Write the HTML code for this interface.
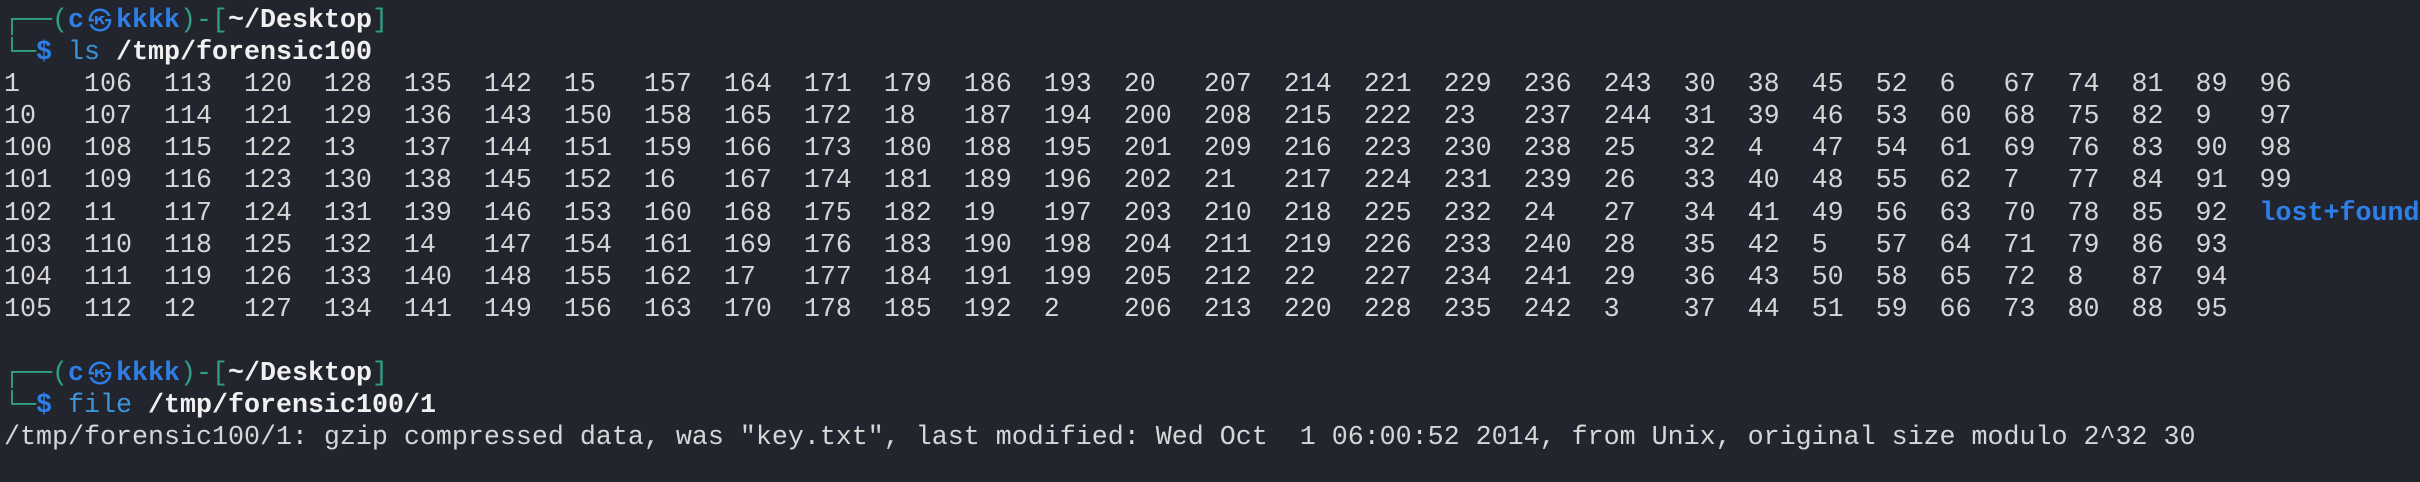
<!DOCTYPE html>
<html><head><meta charset="utf-8"><style>
html,body{margin:0;padding:0;background:#22252e;width:2420px;height:482px;overflow:hidden}
pre{margin:0;padding:5px 0 0 4px;font-family:"Liberation Mono","DejaVu Sans Mono",monospace;font-size:26.67px;line-height:32.1px;color:#d6d6d6}
.t{color:#2f9f86}.b{color:#2f7fe8;font-weight:bold}.c{color:#3c95d8}.w{color:#f0f0f0;font-weight:bold}.l{color:#2f7fe8;font-weight:bold}
.s{display:inline-block;width:32px;text-align:center;font-family:"DejaVu Sans","Noto Sans CJK JP",sans-serif;font-size:24px;font-weight:normal;line-height:32.1px;vertical-align:top}
</style></head><body><pre><span class="t">┌──(</span><span class="b">c<span class="s">㉿</span>kkkk</span><span class="t">)-[</span><span class="w">~/Desktop</span><span class="t">]</span>
<span class="t">└─</span><span class="b">$</span> <span class="c">ls</span> <span class="w">/tmp/forensic100</span>
1    106  113  120  128  135  142  15   157  164  171  179  186  193  20   207  214  221  229  236  243  30  38  45  52  6   67  74  81  89  96
10   107  114  121  129  136  143  150  158  165  172  18   187  194  200  208  215  222  23   237  244  31  39  46  53  60  68  75  82  9   97
100  108  115  122  13   137  144  151  159  166  173  180  188  195  201  209  216  223  230  238  25   32  4   47  54  61  69  76  83  90  98
101  109  116  123  130  138  145  152  16   167  174  181  189  196  202  21   217  224  231  239  26   33  40  48  55  62  7   77  84  91  99
102  11   117  124  131  139  146  153  160  168  175  182  19   197  203  210  218  225  232  24   27   34  41  49  56  63  70  78  85  92  <span class="l">lost+found</span>
103  110  118  125  132  14   147  154  161  169  176  183  190  198  204  211  219  226  233  240  28   35  42  5   57  64  71  79  86  93
104  111  119  126  133  140  148  155  162  17   177  184  191  199  205  212  22   227  234  241  29   36  43  50  58  65  72  8   87  94
105  112  12   127  134  141  149  156  163  170  178  185  192  2    206  213  220  228  235  242  3    37  44  51  59  66  73  80  88  95

<span class="t">┌──(</span><span class="b">c<span class="s">㉿</span>kkkk</span><span class="t">)-[</span><span class="w">~/Desktop</span><span class="t">]</span>
<span class="t">└─</span><span class="b">$</span> <span class="c">file</span> <span class="w">/tmp/forensic100/1</span>
/tmp/forensic100/1: gzip compressed data, was "key.txt", last modified: Wed Oct  1 06:00:52 2014, from Unix, original size modulo 2^32 30
</pre></body></html>
